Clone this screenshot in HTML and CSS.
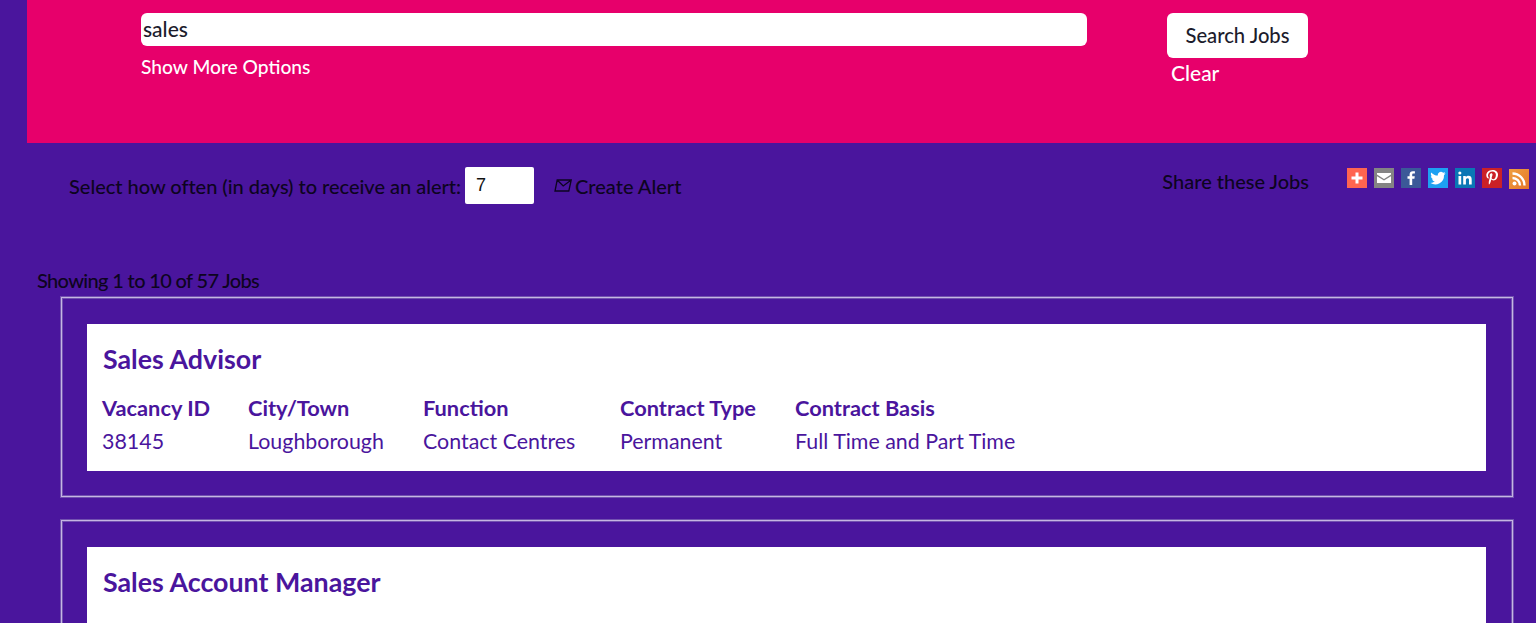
FILE: index.html
```html
<!DOCTYPE html>
<html lang="en">
<head>
<meta charset="utf-8">
<title>Jobs</title>
<link rel="stylesheet" href="styles.css">
</head>
<body>
<div class="page">
  <section class="search">
    <div class="search-main">
      <input class="keyword" type="text" value="sales" aria-label="Keywords">
      <a class="more">Show More Options</a>
    </div>
    <div class="search-actions">
      <button class="go" type="button">Search Jobs</button>
      <a class="clear">Clear</a>
    </div>
  </section>

  <section class="tools">
    <div class="alert">
      <span class="alert-label">Select how often (in days) to receive an alert:</span>
      <input class="days" type="text" value="7" aria-label="Days">
      <a class="create">
        <svg class="env" viewBox="0 0 18 13" width="18" height="13"><path d="M3.200 1h14l-2.400 11H1z M3.200 1l6 6 8-6" fill="none" stroke="#0d0420" stroke-width="1.300"/></svg>
        Create Alert
      </a>
    </div>
    <div class="share">
      <span class="share-label">Share these Jobs</span>
      <div class="icons">
        <span class="ic plus"><svg viewBox="0 0 20 20"><path d="M10 4.500v11M4.500 10h11" stroke="#fff" stroke-width="3"/></svg></span>
        <span class="ic mail"><svg viewBox="0 0 20 20"><path d="M3 5h14v1.600L10 11 3 6.600z M3 8.200l7 4.400 7-4.400V15H3z" fill="#fff"/></svg></span>
        <span class="ic fb"><svg viewBox="0 0 20 20"><path d="M11.200 17v-6.200h2.200l.4-2.500h-2.600V6.800c0-.8.3-1.200 1.200-1.200h1.500V3.300c-.4 0-1.200-.1-2-.1-2.100 0-3.300 1.200-3.300 3.400v1.700H6.500v2.500h2.100V17z" fill="#fff"/></svg></span>
        <span class="ic tw"><svg viewBox="0 0 20 20"><path d="M17.500 5.200c-.6.300-1.200.4-1.800.5.700-.4 1.100-1 1.400-1.700-.6.400-1.300.6-2 .8a3.100 3.100 0 0 0-5.300 2.800C7.200 7.500 4.900 6.300 3.300 4.400c-.8 1.400-.4 3.200 1 4.100-.5 0-1-.2-1.400-.4 0 1.500 1.100 2.800 2.500 3.100-.5.100-.9.100-1.400 0 .4 1.200 1.500 2.100 2.900 2.100A6.300 6.300 0 0 1 2.500 15a8.800 8.800 0 0 0 13.500-7.800c.6-.5 1.100-1.200 1.500-2z" fill="#fff"/></svg></span>
        <span class="ic li"><svg viewBox="0 0 20 20"><path d="M3.500 8h2.700v8.500H3.500z M4.850 3.500a1.550 1.550 0 1 1 0 3.100 1.550 1.550 0 0 1 0-3.100z M8.200 8h2.600v1.200c.5-.8 1.400-1.400 2.700-1.400 2.400 0 3.200 1.500 3.200 3.900v4.800H14v-4.300c0-1.100-.3-2-1.400-2-1.200 0-1.700.9-1.700 2v4.300H8.200z" fill="#fff"/></svg></span>
        <span class="ic pin"><svg viewBox="0 0 20 20"><path d="M10.500 2C6.300 2 4.300 4.800 4.300 7.300c0 1.500.6 2.800 1.800 3.300.2.100.4 0 .4-.2l.2-.7c.1-.2 0-.3-.1-.5-.3-.4-.6-.9-.6-1.700 0-2.200 1.700-4.100 4.300-4.100 2.300 0 3.600 1.400 3.600 3.300 0 2.500-1.100 4.600-2.800 4.600-.9 0-1.600-.8-1.400-1.700.3-1.100.8-2.300.8-3.100 0-.7-.4-1.300-1.200-1.300-.9 0-1.600 1-1.600 2.200 0 .8.300 1.300.3 1.300l-1.100 4.600c-.3 1.400 0 3.100 0 3.200 0 .1.100.1.200.1.100-.1 1.200-1.500 1.600-2.900l.6-2.400c.3.600 1.200 1.100 2.100 1.100 2.800 0 4.600-2.500 4.600-5.900C16 4.100 13.700 2 10.500 2z" fill="#fff"/></svg></span>
        <span class="ic rss"><svg viewBox="0 0 20 20"><circle cx="5.500" cy="14.500" r="2" fill="#fff"/><path d="M3.500 9a7.500 7.500 0 0 1 7.500 7.500M3.500 4.500a12 12 0 0 1 12 12" fill="none" stroke="#fff" stroke-width="2.400"/></svg></span>
      </div>
    </div>
  </section>

  <p class="count">Showing 1 to 10 of 57 Jobs</p>

  <article class="job">
    <div class="job-inner">
      <h2>Sales Advisor</h2>
      <div class="facts">
        <div class="fact f1"><b>Vacancy ID</b><span>38145</span></div>
        <div class="fact f2"><b>City/Town</b><span>Loughborough</span></div>
        <div class="fact f3"><b>Function</b><span>Contact Centres</span></div>
        <div class="fact f4"><b>Contract Type</b><span>Permanent</span></div>
        <div class="fact f5"><b>Contract Basis</b><span>Full Time and Part Time</span></div>
      </div>
    </div>
  </article>

  <article class="job">
    <div class="job-inner">
      <h2>Sales Account Manager</h2>
      <div class="facts">
        <div class="fact f1b"><b>Vacancy ID</b><span>38100</span></div>
        <div class="fact f2b"><b>City/Town</b><span>Leeds</span></div>
        <div class="fact f3b"><b>Function</b><span>Sales</span></div>
        <div class="fact f4b"><b>Contract Type</b><span>Permanent</span></div>
        <div class="fact f5"><b>Contract Basis</b><span>Full Time</span></div>
      </div>
    </div>
  </article>
</div>
</body>
</html>
```
FILE: styles.css
```css
* { box-sizing: border-box; }
html, body { margin: 0; height: 100%; overflow: hidden; }
body {
  background: #4a159d;
  color: #0d0420;
  font-family: "Lato", "Liberation Sans", sans-serif;
  font-size: 20px;
  font-weight: 500;
}
a { display: block; }
.page { padding-left: 27px; }

.search {
  height: 143px;
  background: #e7006b;
  display: flex;
  padding: 13px 0 0 114px;
  color: #fff;
}
.search-main { width: 946px; display: flex; flex-direction: column; }
.keyword {
  width: 946px;
  height: 33px;
  border: 0;
  border-radius: 6px;
  padding: 0 2px 3px;
  background: #fff;
  color: #1c1c2c;
  font: 500 21px "Lato", "Liberation Sans", sans-serif;
}
.more { margin-top: 8px; line-height: 26px; font-size: 19.2px; }
.search-actions { margin-left: 80px; display: flex; flex-direction: column; align-items: flex-start; }
.go {
  width: 141px;
  height: 45px;
  border: 0;
  border-radius: 6px;
  padding: 0 0 1px;
  background: #fff;
  color: #1c1c2c;
  font: 500 20.200px "Lato", "Liberation Sans", sans-serif;
}
.clear { margin: 2px 0 0 4px; line-height: 26px; font-size: 21px; }

.tools {
  height: 123px;
  display: flex;
  justify-content: space-between;
  padding: 24px 7px 0 42px;
}
.alert { display: flex; align-items: center; height: 37px; }
.alert-label { letter-spacing: -.02px; }
.days {
  width: 69px;
  height: 37px;
  margin-left: 4px;
  border: 0;
  border-radius: 2px;
  padding: 0 11px;
  background: #fff;
  color: #111;
  font: 18px "Liberation Sans", sans-serif;
}
.create { margin-left: 20px; display: flex; align-items: center; gap: 3px; }
.share { display: flex; align-items: flex-start; }
.share-label { line-height: 28px; margin-right: 38px; }
.icons { display: flex; gap: 7px; margin-top: 1px; }
.ic { width: 20px; height: 20px; display: block; }
.ic svg { display: block; width: 20px; height: 20px; }
.plus { background: #ff6550; }
.mail { background: #848484; }
.fb { background: #3b5998; }
.tw { background: #1da1f2; }
.li { background: #0a77b5; }
.pin { background: #cb2027; }
.rss { background: linear-gradient(135deg, #f0a040, #e5752a); margin-top: 1px; }

.count { margin: 0 0 7px 10px; line-height: 28px; height: 24px; letter-spacing: -.65px; }

.job {
  width: 1452px;
  height: 200px;
  margin: 0 0 23px 34px;
  border: 1px solid #c5b6e2;
  box-shadow: 0 0 0 1px #7251b0, inset 0 0 0 1px #7251b0;
  padding: 26px 26px 0 25px;
}
.job-inner { background: #fff; height: 147px; padding: 17px 16px 0 15px; color: #4a159d; }
h2 { margin: 0 0 0 1px; font-size: 26.800px; font-weight: 700; line-height: 36px; }
.facts { display: flex; margin-top: 15px; }
.fact { display: flex; flex-direction: column; }
.fact b { font-size: 21.800px; font-weight: 700; line-height: 32px; }
.fact span { font-size: 21.400px; line-height: 35px; font-weight: 400; }
.f1 { width: 146px; }
.f2 { width: 175px; }
.f3 { width: 197px; }
.f4 { width: 175px; }
.f1b { width: 146px; }
.f2b { width: 139px; }
.f3b { width: 154px; }
.f4b { width: 176px; }
```
